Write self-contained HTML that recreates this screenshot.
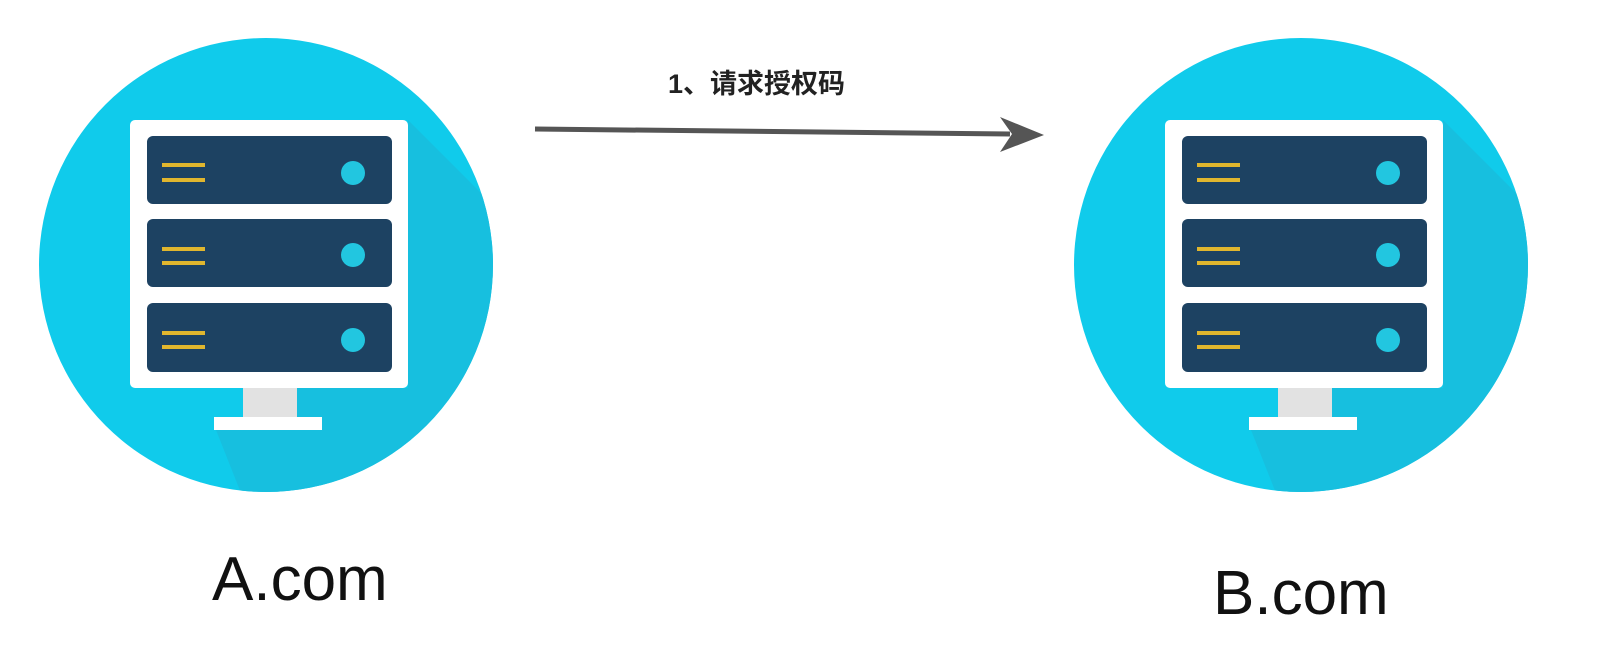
<!DOCTYPE html>
<html><head><meta charset="utf-8"><style>
html,body{margin:0;padding:0;background:#fff;width:1600px;height:646px;overflow:hidden}
svg{display:block}
</style></head><body>
<svg width="1600" height="646" viewBox="0 0 1600 646" xmlns="http://www.w3.org/2000/svg">
<defs>
<g id="srv">
  <clipPath id="cc"><circle cx="266" cy="265" r="227"/></clipPath>
  <circle cx="266" cy="265" r="227" fill="#10cbeb"/>
  <polygon clip-path="url(#cc)" points="408,120 600,312 600,700 323,700 216,430 297,430 297,388 408,388" fill="#17bfdf"/>
  <rect x="130" y="120" width="278" height="268" rx="5" fill="#fff"/>
  <rect x="243" y="388" width="54" height="30" fill="#e2e2e2"/>
  <rect x="214" y="417" width="108" height="13" fill="#fff"/>
  <g fill="#1d4262">
    <rect x="147" y="136" width="245" height="68" rx="6"/>
    <rect x="147" y="219" width="245" height="68" rx="6"/>
    <rect x="147" y="303" width="245" height="69" rx="6"/>
  </g>
  <g fill="#e0b62e">
    <rect x="162" y="163" width="43" height="4"/><rect x="162" y="178" width="43" height="4"/>
    <rect x="162" y="247" width="43" height="4"/><rect x="162" y="261" width="43" height="4"/>
    <rect x="162" y="331" width="43" height="4"/><rect x="162" y="345" width="43" height="4"/>
  </g>
  <g fill="#22c6e0">
    <circle cx="353" cy="173" r="12"/><circle cx="353" cy="255" r="12"/><circle cx="353" cy="340" r="12"/>
  </g>
</g>
</defs>
<use href="#srv"/>
<use href="#srv" transform="translate(1035,0)"/>
<text x="668" y="93" font-family="'Liberation Sans','Noto Sans CJK SC',sans-serif" font-size="27" font-weight="bold" fill="#222">1、请求授权码</text>
<line x1="535" y1="129" x2="1010" y2="134" stroke="#555" stroke-width="5"/>
<polygon points="1000,117 1044,135 1000,152 1012,134" fill="#555"/>
<text x="212" y="600" font-family="'Liberation Sans',sans-serif" font-size="62" fill="#111">A.com</text>
<text x="1213" y="614" font-family="'Liberation Sans',sans-serif" font-size="62" fill="#111">B.com</text>
</svg>
</body></html>
